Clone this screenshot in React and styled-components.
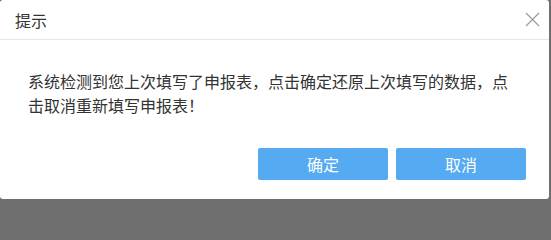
import React from 'react';
import styled, { createGlobalStyle } from 'styled-components';

const GlobalStyle = createGlobalStyle`
  html, body {
    margin: 0;
    padding: 0;
    background: #6f6f6f;
  }
  body {
    font-family: "Noto Sans CJK SC", "Microsoft YaHei", sans-serif;
  }
`;

const Dialog = styled.div`
  width: 549px;
  height: 199px;
  background: #fff;
  border-radius: 3px;
  display: flex;
  flex-direction: column;
  overflow: hidden;
`;

const Header = styled.div`
  height: 39px;
  display: flex;
  align-items: center;
  justify-content: space-between;
  padding: 0 9px 0 15px;
  border-bottom: 1px solid #e6e6e6;
`;

const Title = styled.span`
  font-size: 16px;
  color: #333;
`;

const Close = styled.button`
  width: 16px;
  height: 16px;
  padding: 0;
  border: none;
  background: none;
  display: flex;
  align-items: center;
  justify-content: center;
  cursor: pointer;
`;

const Body = styled.p`
  margin: 0;
  padding: 29px 28px 0 28px;
  font-size: 16px;
  line-height: 24px;
  color: #333;
`;

const Footer = styled.div`
  display: flex;
  justify-content: flex-end;
  gap: 8px;
  padding: 31px 23px 0 0;
`;

const Button = styled.button`
  width: 130px;
  height: 32px;
  border: none;
  border-radius: 2px;
  background: #55aaf2;
  color: #fff;
  font-family: inherit;
  font-size: 16px;
  cursor: pointer;
`;

export default function App() {
  return (
    <>
      <GlobalStyle />
      <Dialog>
        <Header>
          <Title>提示</Title>
          <Close aria-label="关闭">
            <svg width="15" height="15" viewBox="0 0 15 15">
              <path d="M1 1 L14 14 M14 1 L1 14" stroke="#9a9a9a" strokeWidth="1.2" fill="none" />
            </svg>
          </Close>
        </Header>
        <Body>
          系统检测到您上次填写了申报表，点击确定还原上次填写的数据，点击取消重新填写申报表！
        </Body>
        <Footer>
          <Button>确定</Button>
          <Button>取消</Button>
        </Footer>
      </Dialog>
    </>
  );
}
